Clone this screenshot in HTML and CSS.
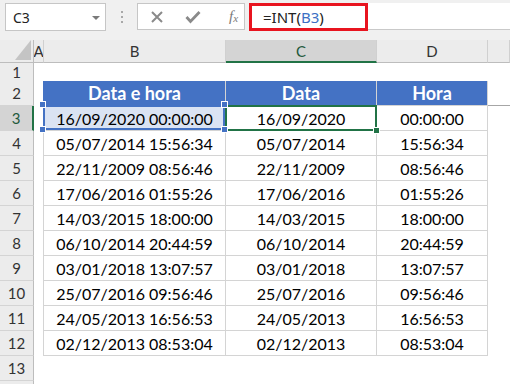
FILE: index.html
```html
<!DOCTYPE html>
<html>
<head>
<meta charset="utf-8">
<link rel="stylesheet" href="styles.css">
</head>
<body>
<div class="app">
  <div class="toolbar">
    <div class="namebox"><span class="nb-text">C3</span><span class="caret"></span></div>
    <div class="grip"><i></i><i></i><i></i></div>
    <div class="fxbox">
      <svg class="ico" width="14" height="14" viewBox="0 0 14 14"><path d="M2 2 L12 12 M12 2 L2 12" stroke="#8a8a8a" stroke-width="2" fill="none"/></svg>
      <svg class="ico" width="16" height="14" viewBox="0 0 16 14"><path d="M1.5 7 L5.5 11.5 L14.5 2" stroke="#8a8a8a" stroke-width="2.8" fill="none"/></svg>
      <span class="fx">f<sub>x</sub></span>
    </div>
    <div class="formula">
      <div class="hl">=INT(<span class="fref">B3</span>)</div>
      <div class="ffill"></div>
    </div>
  </div>

  <div class="sheet">
    <div class="row colhdr">
      <div class="corner"><div class="tri"></div></div>
      <div class="ch">A</div>
      <div class="ch">B</div>
      <div class="ch sel">C</div>
      <div class="ch">D</div>
      <div class="ch"></div>
    </div>
    <div class="row r1">
      <div class="rh">1</div><div class="c"></div><div class="c tt"></div><div class="c tt"></div><div class="c tt"></div><div class="c"></div>
    </div>
    <div class="row">
      <div class="rh">2</div><div class="c al alb"></div><div class="c t th">Data e hora</div><div class="c t th">Data</div><div class="c t th">Hora</div><div class="c ext"></div>
    </div>
    <div class="row">
      <div class="rh sel">3</div><div class="c al"></div>
      <div class="c t refcell">16/09/2020 00:00:00<span class="refbox"></span><i class="h h1"></i><i class="h h2"></i><i class="h h3"></i><i class="h h4"></i></div>
      <div class="c t active">16/09/2020<span class="actbox"></span><i class="fillh"></i></div>
      <div class="c t">00:00:00</div><div class="c"></div>
    </div>
    <div class="row">
      <div class="rh">4</div><div class="c al"></div><div class="c t">05/07/2014 15:56:34</div><div class="c t">05/07/2014</div><div class="c t">15:56:34</div><div class="c"></div>
    </div>
    <div class="row">
      <div class="rh">5</div><div class="c al"></div><div class="c t">22/11/2009 08:56:46</div><div class="c t">22/11/2009</div><div class="c t">08:56:46</div><div class="c"></div>
    </div>
    <div class="row">
      <div class="rh">6</div><div class="c al"></div><div class="c t">17/06/2016 01:55:26</div><div class="c t">17/06/2016</div><div class="c t">01:55:26</div><div class="c"></div>
    </div>
    <div class="row">
      <div class="rh">7</div><div class="c al"></div><div class="c t">14/03/2015 18:00:00</div><div class="c t">14/03/2015</div><div class="c t">18:00:00</div><div class="c"></div>
    </div>
    <div class="row">
      <div class="rh">8</div><div class="c al"></div><div class="c t">06/10/2014 20:44:59</div><div class="c t">06/10/2014</div><div class="c t">20:44:59</div><div class="c"></div>
    </div>
    <div class="row">
      <div class="rh">9</div><div class="c al"></div><div class="c t">03/01/2018 13:07:57</div><div class="c t">03/01/2018</div><div class="c t">13:07:57</div><div class="c"></div>
    </div>
    <div class="row">
      <div class="rh">10</div><div class="c al"></div><div class="c t">25/07/2016 09:56:46</div><div class="c t">25/07/2016</div><div class="c t">09:56:46</div><div class="c"></div>
    </div>
    <div class="row">
      <div class="rh">11</div><div class="c al"></div><div class="c t">24/05/2013 16:56:53</div><div class="c t">24/05/2013</div><div class="c t">16:56:53</div><div class="c"></div>
    </div>
    <div class="row">
      <div class="rh">12</div><div class="c al"></div><div class="c t">02/12/2013 08:53:04</div><div class="c t">02/12/2013</div><div class="c t">08:53:04</div><div class="c"></div>
    </div>
    <div class="row">
      <div class="rh">13</div><div class="c"></div><div class="c"></div><div class="c"></div><div class="c"></div><div class="c"></div>
    </div>
    <div class="row">
      <div class="rh"></div><div class="c"></div><div class="c"></div><div class="c"></div><div class="c"></div><div class="c"></div>
    </div>
  </div>
</div>
</body>
</html>
```

FILE: styles.css
```css
* { box-sizing: border-box; }
html, body { margin: 0; padding: 0; background: #ffffff; }
.app {
  width: 510px;
  height: 384px;
  overflow: hidden;
  font-family: "Lato", "Liberation Sans", sans-serif;
  color: #000;
}

/* ---------- formula bar ---------- */
.toolbar {
  height: 40px;
  background: #f0f0f0;
  display: flex;
  align-items: flex-start;
  padding-top: 3px;
  padding-left: 5px;
}
.namebox {
  width: 101px;
  height: 28px;
  background: #fff;
  border: 1px solid #c6c6c6;
  display: flex;
  align-items: center;
  justify-content: space-between;
  padding: 0 5px 0 7px;
  font-family: "Noto Sans", "Open Sans", sans-serif;
  font-size: 14px;
  color: #222;
}
.caret {
  width: 0; height: 0;
  border-left: 4px solid transparent;
  border-right: 4px solid transparent;
  border-top: 4px solid #7a7a7a;
  margin-top: 1px;
}
.grip {
  width: 31px;
  height: 28px;
  display: flex;
  flex-direction: column;
  align-items: center;
  justify-content: center;
  gap: 3px;
}
.grip i {
  display: block;
  width: 2px; height: 2px;
  background: #a8a8a8;
}
.fxbox {
  width: 108px;
  height: 27px;
  background: #fff;
  border: 1px solid #c6c6c6;
  display: flex;
  align-items: center;
  padding-left: 12px;
  gap: 21px;
}
.ico { display: block; }
.fx {
  font-family: "Liberation Serif", serif;
  font-style: italic;
  font-size: 15px;
  color: #7a7a7a;
  margin-left: 7px;
  line-height: 1;
}
.fx sub { font-size: 11px; vertical-align: -1px; }
.formula {
  flex: 1;
  margin-left: 4px;
  height: 28px;
  display: flex;
}
.hl {
  width: 119px;
  height: 28px;
  border: 3px solid #e8141f;
  background: #fff;
  padding-left: 11px;
  display: flex;
  align-items: center;
  font-family: "Noto Sans", "Open Sans", sans-serif;
  font-size: 15px;
  color: #222;
  white-space: pre;
}
.fref { color: #3b6fc4; }
.ffill {
  flex: 1;
  height: 27px;
  background: #fff;
  border-bottom: 1px solid #c9c9c9;
}

/* ---------- sheet ---------- */
.sheet { background: #fff; }
.row {
  display: grid;
  grid-template-columns: 34px 10px 182px 151px 111px 1fr;
  height: 25px;
}
.row.colhdr { height: 23px; }
.row.r1 { height: 18px; }

.row > div {
  display: flex;
  align-items: center;
  justify-content: center;
  white-space: nowrap;
  overflow: visible;
}

.corner {
  background: #ececec;
  border-right: 1px solid #bdbdbd;
  border-bottom: 1px solid #bdbdbd;
  position: relative;
}
.corner .tri {
  position: absolute;
  right: 2px;
  bottom: 2px;
  width: 16px;
  height: 20px;
  background: #c4c4c4;
  clip-path: polygon(100% 0, 100% 100%, 0 100%);
}
.ch {
  background: #ececec;
  border-right: 1px solid #d0d0d0;
  border-bottom: 1px solid #bdbdbd;
  font-size: 15px;
  color: #333;
  overflow: hidden !important;
}
.ch.sel {
  background: #d4d4d4;
  border-bottom: 2px solid #217346;
  color: #1f5a3c;
}
.rh {
  background: #ececec;
  border-right: 1px solid #bdbdbd;
  border-bottom: 1px solid #d4d4d4;
  font-size: 15px;
  color: #333;
}
.rh.sel {
  background: #d4d4d4;
  border-right: 2px solid #217346;
  color: #1f5a3c;
}

.c { font-size: 16px; }
.c.tt { border-bottom: 1px solid #d4d4d4; }
.c.al { border-right: 1px solid #d4d4d4; }
.c.al.alb { border-right-color: #4472c4; }
.c.t {
  border-right: 1px solid #d4d4d4;
  border-bottom: 1px solid #d4d4d4;
}
.c.th {
  background: #4472c4;
  color: #fff;
  font-weight: 700;
  font-size: 18px;
}
.c.ext { border-bottom: 1px solid #a6a6a6; }

.refcell {
  position: relative;
  background: #dae3f3;
}
.refbox {
  position: absolute;
  left: -1px; top: -1px; right: 0; bottom: 0;
  border: 2px solid #4472c4;
  pointer-events: none;
}
.h {
  position: absolute;
  width: 5px; height: 5px;
  background: #4472c4;
  outline: 1px solid #fff;
  z-index: 3;
}
.h1 { left: -4px; top: -4px; }
.h2 { right: -2px; top: -4px; }
.h3 { left: -4px; bottom: -2px; }
.h4 { right: -2px; bottom: -2px; }

.active { position: relative; }
.actbox {
  position: absolute;
  left: -1px; top: -1px; right: -1px; bottom: -1px;
  border: 2px solid #217346;
  z-index: 2;
}
.fillh {
  position: absolute;
  right: -3px; bottom: -3px;
  width: 5px; height: 5px;
  background: #217346;
  outline: 1px solid #fff;
  z-index: 4;
}
```
